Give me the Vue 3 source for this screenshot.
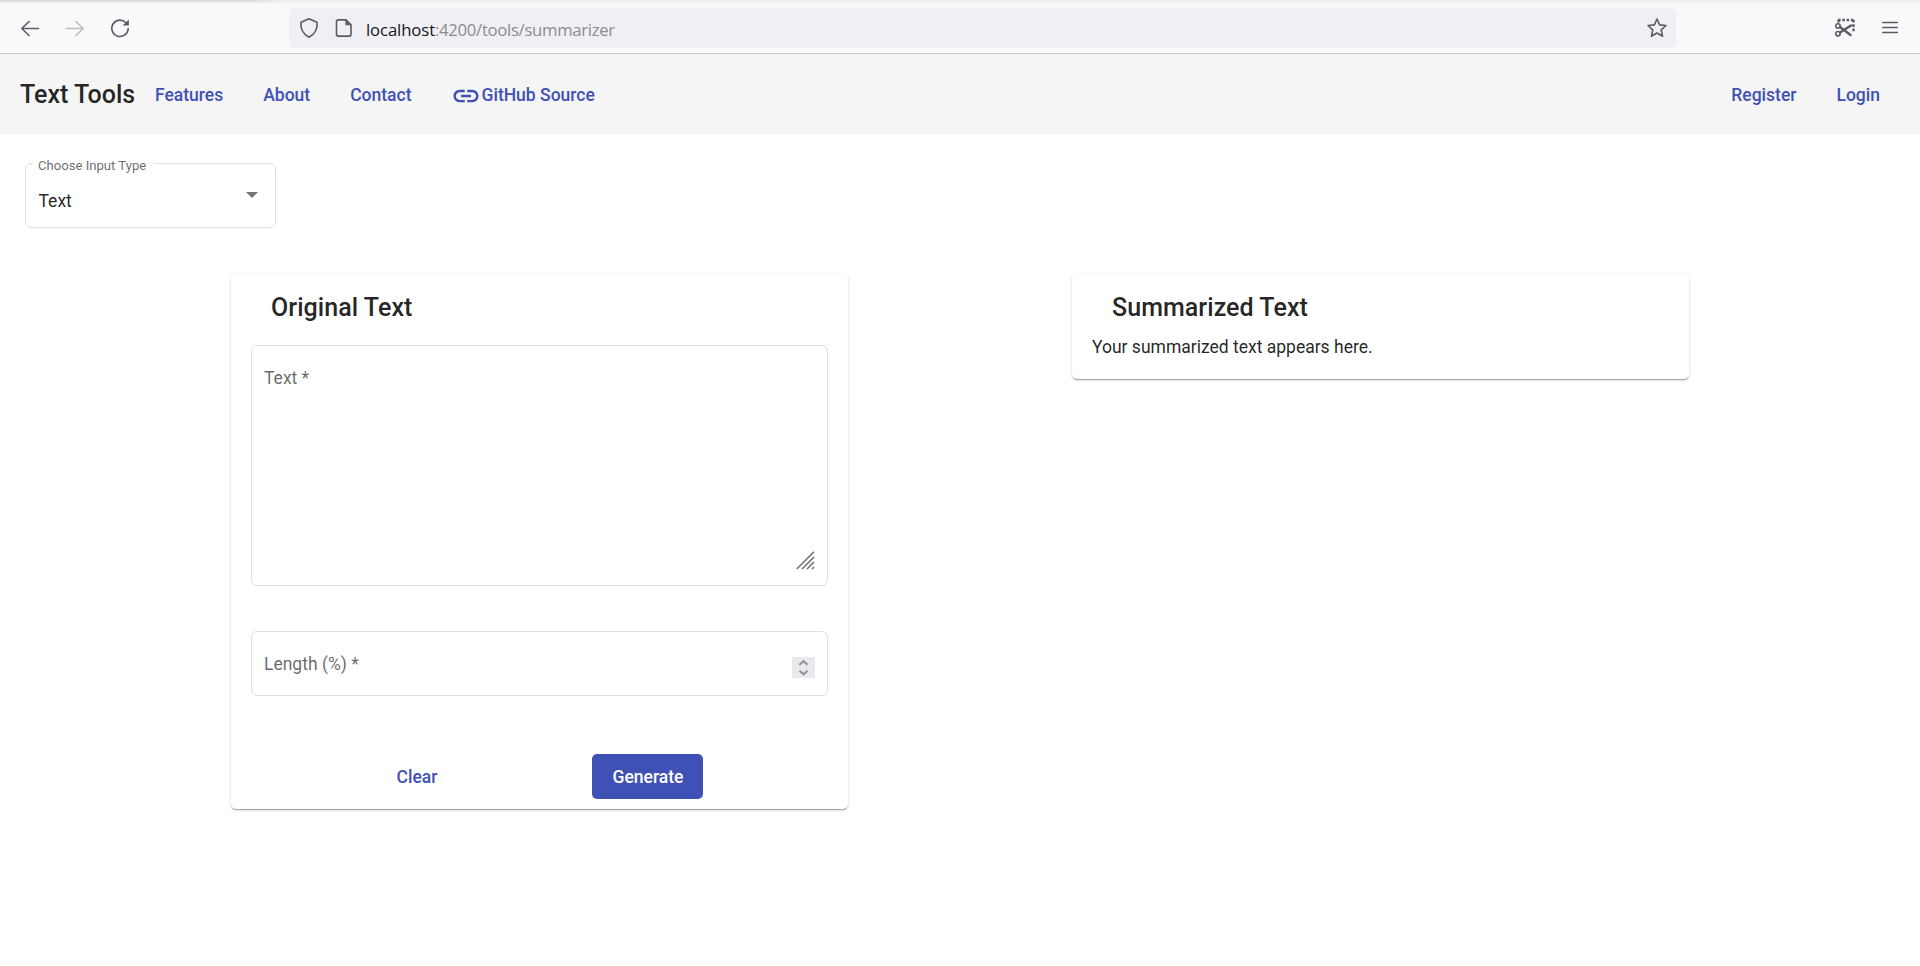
<script setup>
const links = ['Features', 'About', 'Contact']
</script>

<template>
  <div class="window">
    <div class="tabstrip"><div class="tabshade"></div></div>
    <div class="toolbar">
      <svg class="ic back" width="20" height="20" viewBox="0 0 20 20"><path d="M18.500 10.500H2.200M9 3.500L1.800 10.500L9 17.500" /></svg>
      <svg class="ic fwd" width="20" height="20" viewBox="0 0 20 20"><path d="M1.500 10.500H17.800M11 3.500L18.200 10.500L11 17.500" /></svg>
      <svg class="ic reload" width="20" height="20" viewBox="0 0 20 20"><path d="M16 4.700A8.200 8.200 0 1 0 18.200 10.500" /><path class="fill" d="M18.900 1.600V7.600H12.600Z" /></svg>
      <div class="urlbar">
        <svg class="ic shield" width="20" height="22" viewBox="0 0 20 22"><path d="M10 1.800L18 5.200C18.700 11.500 15.600 17.300 10 20.200C4.400 17.300 1.300 11.500 2 5.200Z" /></svg>
        <svg class="ic page" width="18" height="20" viewBox="0 0 18 20"><path d="M3.300 1.900H11L16 6.900V16.300A1.800 1.800 0 0 1 14.200 18.100H3.300A1.800 1.800 0 0 1 1.500 16.300V3.700A1.800 1.800 0 0 1 3.300 1.900Z" /><path class="fill" d="M10.400 1.500V7.300H16.400Z" /></svg>
        <span class="url"><span class="host">localhost</span>:4200/tools/summarizer</span>
        <svg class="ic star" width="22" height="22" viewBox="0 0 22 22"><path d="M11 2L13.600 7.900L20 8.500L15.200 12.900L16.600 19.300L11 16L5.400 19.300L6.800 12.900L2 8.500L8.400 7.900Z" /></svg>
      </div>
      <svg class="ic snip" width="22" height="22" viewBox="0 0 22 22">
        <path class="dash" d="M4.500 3V6M4 3H20.500M19.500 3V16" />
        <circle cx="4" cy="9" r="2.200" /><circle cx="4" cy="16.700" r="2.200" />
        <path class="blade" d="M6 10L16.500 18M6 15.600L17 8.600" />
      </svg>
      <svg class="ic menu" width="16" height="16" viewBox="0 0 16 16"><path d="M.8 2.500H15.200M.8 7.500H15.200M.8 12.500H15.200" /></svg>
    </div>

    <nav class="nav">
      <span class="brand">Text Tools</span>
      <a v-for="l in links" :key="l" class="link">{{ l }}</a>
      <a class="link source">
        <svg width="30" height="30" viewBox="0 0 24 24"><path d="M3.900 12c0-1.710 1.390-3.100 3.100-3.100h4V7H7c-2.760 0-5 2.240-5 5s2.240 5 5 5h4v-1.900H7c-1.710 0-3.100-1.390-3.100-3.100zM8 13h8v-2H8v2zm9-6h-4v1.900h4c1.710 0 3.100 1.390 3.100 3.100s-1.390 3.100-3.100 3.100h-4V17h4c2.760 0 5-2.240 5-5s-2.240-5-5-5z" /></svg>
        <span>GitHub Source</span>
      </a>
      <span class="spacer"></span>
      <a class="link">Register</a>
      <a class="link login">Login</a>
    </nav>

    <main>
      <div class="field select">
        <span class="float">Choose Input Type</span>
        <span class="value">Text</span>
        <svg class="arrow" width="12" height="6" viewBox="0 0 12 6"><path d="M0 0H12L6 6Z" /></svg>
      </div>

      <div class="columns">
        <section class="card original">
          <h2>Original Text</h2>
          <div class="field area">
            <span class="label">Text *</span>
            <svg class="grip" width="19" height="19" viewBox="0 0 19 19"><path d="M.8 18L18 .8M6 18L18 6M11 18L18 11M16 18L18 16" /></svg>
          </div>
          <div class="field length">
            <span class="label">Length (%) *</span>
            <span class="spin"><svg width="23" height="21" viewBox="0 0 23 21"><path d="M7.500 7.700L11.500 4.200L15.500 7.700M7.500 13.800L11.500 17.300L15.500 13.800" /></svg></span>
          </div>
          <div class="actions">
            <button class="clear">Clear</button>
            <button class="generate">Generate</button>
          </div>
        </section>
        <section class="card">
          <h2>Summarized Text</h2>
          <p>Your summarized text appears here.</p>
        </section>
      </div>
    </main>
  </div>
</template>

<style>
body { background: #fff; }
</style>

<style scoped>
* { box-sizing: border-box; }
.window { height: 966px; overflow: hidden; font-family: Roboto, "Liberation Sans", sans-serif; color: rgba(0, 0, 0, .87); font-size: 17.5px; }
.tabstrip { height: 3px; background: #f0f0f2; }
.tabshade { width: 280px; height: 2px; background: linear-gradient(90deg, #dcdcdf 90%, #f0f0f2); }
.toolbar { height: 51px; background: #f9f9fb; border-bottom: 1px solid #ccccce; display: flex; align-items: center; }
.ic { display: block; flex: none; fill: none; stroke: #5b5b66; stroke-width: 1.6; stroke-linejoin: round; stroke-linecap: round; }
.ic .fill { fill: #5b5b66; stroke: none; }
.back { margin-left: 20px; }
.fwd { margin-left: 25px; stroke: #bdbdc2; }
.reload { margin-left: 25px; }
.urlbar { margin-left: 159px; width: 1387px; height: 40px; border-radius: 5px; background: #f0f0f4; display: flex; align-items: center; }
.shield { margin-left: 10px; }
.page { margin-left: 16px; }
.url { margin-left: 13px; font-family: "Open Sans", "Noto Sans", sans-serif; font-size: 16.700px; line-height: 24px; color: #8b8b90; letter-spacing: -.3px; margin-top: 3px; white-space: nowrap; }
.host { color: #15141a; letter-spacing: -.1px; }
.star { margin-left: auto; margin-right: 8px; }
.snip { margin-left: 158px; }
.snip .dash { stroke-width: 2.400; stroke-dasharray: 2.600 1.700; stroke-linecap: butt; }
.snip .blade { stroke-width: 2.400; }
.menu { margin-left: 26px; margin-top: 0; }

.nav { height: 80px; background: #f5f5f5; display: flex; align-items: center; padding: 2px 20px 0; font-weight: 500; }
.brand { font-size: 25px; width: 115px; white-space: nowrap; margin-top: -1px; }
.link { color: #3f51b5; padding: 0 20px; white-space: nowrap; line-height: 45px; }
.source { display: flex; align-items: center; }
.source svg { fill: #3f51b5; margin-top: 1px; margin-left: -.5px; margin-right: .5px; }
.spacer { flex: 1; }

main { padding-top: 29px; }
.field { position: relative; border: 1px solid #e0e0e0; border-radius: 6px; background: #fff; }
.select { margin-left: 25px; width: 251px; height: 65px; display: flex; align-items: center; padding: 0 17px 0 12.500px; }
.float { position: absolute; left: 7px; top: -10px; padding: 0 8px 0 5px; background: #fff; font-size: 13.125px; line-height: 23px; color: rgba(0, 0, 0, .6); white-space: nowrap; }
.value { flex: 1; padding-top: 10px; line-height: 20px; }
.arrow { fill: #757575; margin-bottom: 1px; }
.columns { margin: 46px 0 0 231px; display: flex; align-items: flex-start; gap: 224px; }
.card { width: 617px; border-radius: 5px; padding: 0 20px; background: #fff; box-shadow: 0 2px 1px -1px rgba(0, 0, 0, .2), 0 1px 1px 0 rgba(0, 0, 0, .14), 0 1px 3.500px 0 rgba(0, 0, 0, .15); height: 105px; }
.original { height: 535px; }
h2 { margin: 0; padding: 14px 20px 0; font-size: 25px; font-weight: 500; line-height: 40px; letter-spacing: .05px; }
p { margin: 5px 0 0; line-height: 28px; }
.label { color: rgba(0, 0, 0, .6); line-height: 20px; }
.area { margin-top: 17px; height: 241px; padding: 22px 12px; }
.area .label { display: block; }
.grip { position: absolute; right: 12px; bottom: 15px; fill: none; stroke: #6d6d75; stroke-width: 1.500; }
.length { margin-top: 45px; height: 65px; padding: 0 12px; display: flex; align-items: center; justify-content: space-between; }
.spin { width: 23px; height: 21px; background: #e9e9ed; margin-top: 7px; }
.spin svg { display: block; fill: none; stroke: #8f8f9d; stroke-width: 2; }
.actions { margin-top: 58px; display: flex; justify-content: center; gap: 135px; padding-left: 1px; }
button { font: 500 17.500px/45px Roboto, sans-serif; height: 45px; border: 0; border-radius: 5px; padding: 1px 20px 0; background: none; color: #3f51b5; }
.generate { background: #3f51b5; color: #fff; }
</style>
